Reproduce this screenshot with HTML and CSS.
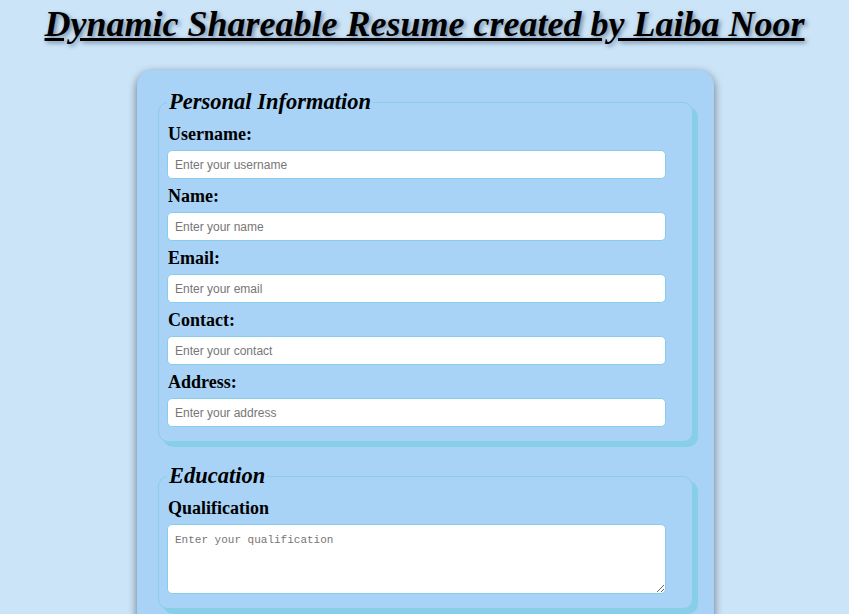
FILE: index.html
```html
<!DOCTYPE html>
<html lang="en">
<head>
<meta charset="UTF-8">
<title>Dynamic Shareable Resume</title>
<link rel="stylesheet" href="styles.css">
</head>
<body>
<h1 class="title">Dynamic Shareable Resume created by Laiba Noor</h1>
<form class="container">
  <fieldset class="section">
    <legend class="legend">Personal Information</legend>
    <label class="label" for="username">Username:</label>
    <input class="field" id="username" type="text" placeholder="Enter your username">
    <label class="label" for="name">Name:</label>
    <input class="field" id="name" type="text" placeholder="Enter your name">
    <label class="label" for="email">Email:</label>
    <input class="field" id="email" type="email" placeholder="Enter your email">
    <label class="label" for="contact">Contact:</label>
    <input class="field" id="contact" type="text" placeholder="Enter your contact">
    <label class="label" for="address">Address:</label>
    <input class="field" id="address" type="text" placeholder="Enter your address">
  </fieldset>
  <fieldset class="section">
    <legend class="legend">Education</legend>
    <label class="label" for="qualification">Qualification</label>
    <textarea class="area" id="qualification" placeholder="Enter your qualification"></textarea>
  </fieldset>
</form>
</body>
</html>
```

FILE: styles.css
```css
html, body {
  margin: 0;
  padding: 0;
}
body {
  background: #cbe4f8;
  font-family: "Liberation Serif", "Times New Roman", serif;
  color: #000;
  overflow: hidden;
}
.title {
  margin: 4px 0 0;
  text-align: center;
  font-size: 36px;
  font-weight: bold;
  font-style: italic;
  text-decoration: underline;
  text-shadow: 2px 2px 4px rgba(40, 60, 90, 0.55);
  line-height: 41px;
}
.container {
  width: 577px;
  box-sizing: border-box;
  margin: 25px 0 0 calc(50% - 287.5px);
  padding: 19px 21px 20px;
  background: #a8d3f7;
  border-radius: 15px;
  box-shadow: 0 3px 9px rgba(0, 0, 0, 0.5);
}
.section {
  margin: 0 0 21px;
  padding: 9px 8px 7px 8px;
  border: 1px solid #87ceeb;
  border-radius: 10px;
  box-shadow: 5px 5px 0 #87ceeb;
}
.legend {
  padding: 0 2px;
  font-size: 22.5px;
  font-weight: bold;
  font-style: italic;
}
.label {
  display: block;
  font-size: 18px;
  font-weight: bold;
  line-height: 21px;
  margin: 0 0 5px 1px;
}
.field {
  display: block;
  box-sizing: border-box;
  width: 499px;
  height: 29px;
  margin: 0 0 7px;
  padding: 0 7px;
  border: 1px solid #87ceeb;
  border-radius: 5px;
  background: #fff;
  font-family: "Liberation Sans", Arial, sans-serif;
  font-size: 12px;
  outline: none;
}
.field::placeholder {
  color: #767676;
}
.area {
  display: block;
  box-sizing: border-box;
  width: 499px;
  height: 70px;
  margin: 0 0 7px;
  padding: 9px 7px 7px;
  border: 1px solid #87ceeb;
  border-radius: 5px;
  background: #fff;
  font-family: "Liberation Mono", "Courier New", monospace;
  font-size: 11px;
  outline: none;
}
.area::placeholder {
  color: #767676;
}
```
